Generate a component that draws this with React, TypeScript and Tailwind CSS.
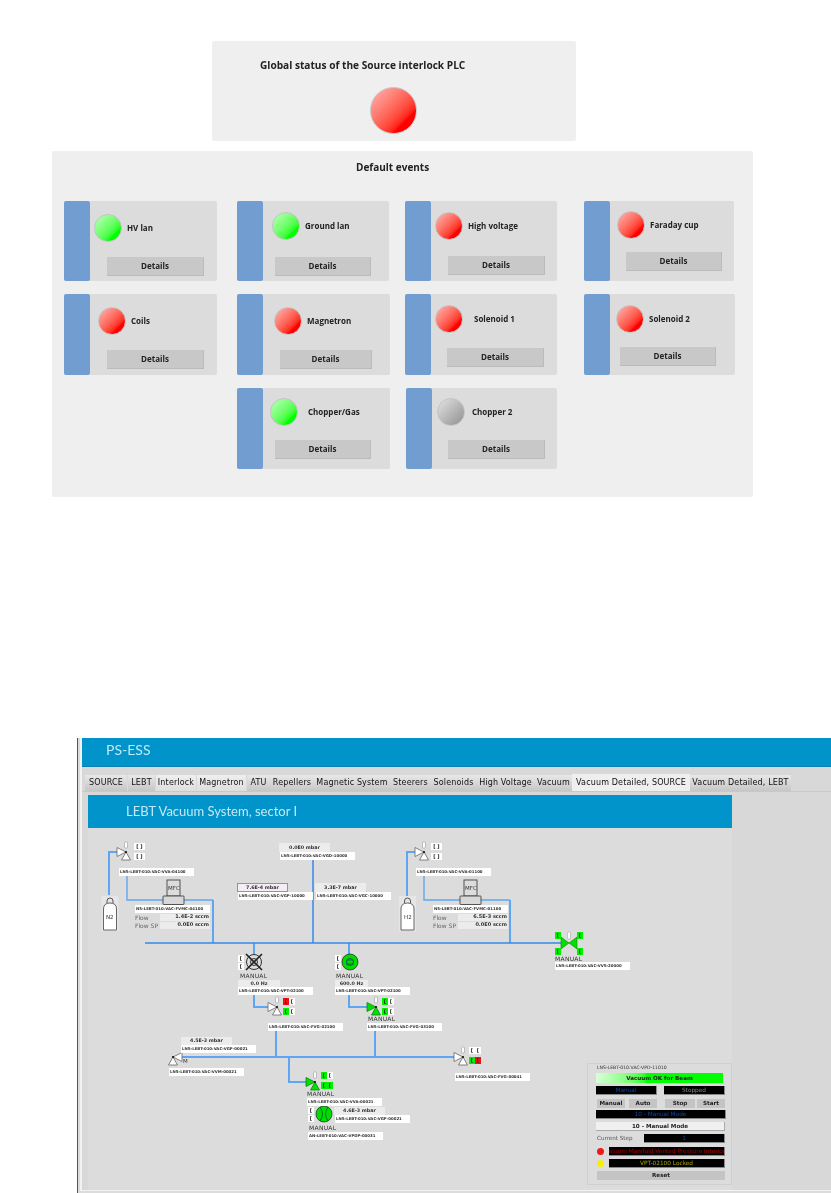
import type { ReactNode } from 'react';

type Led = 'red' | 'green' | 'gray';
type Tone = 'white' | 'green' | 'red';

interface EventCard {
  name: string;
  led: Led;
  cell: string;
  ledBox: string;
  textGap: string;
  button: string;
}

const ledClass: Record<Led, string> = {
  red: 'from-[#ffb4b4] to-[#ff0000] to-75%',
  green: 'from-[#b8ffb8] to-[#00ff00] to-75%',
  gray: 'from-[#e4e4e4] to-[#909090]',
};

// the original panel was placed by hand, so every card has its own small offsets
const cards: EventCard[] = [
  { name: 'HV lan', led: 'green', cell: 'h-[80px] w-[153px]', ledBox: 'ml-[4px] mt-[13px]', textGap: 'ml-[5px]', button: 'ml-[17px] mt-[15px] w-[97px]' },
  { name: 'Ground lan', led: 'green', cell: 'h-[80px] w-[152px]', ledBox: 'ml-[9px] mt-[11px]', textGap: 'ml-[5px]', button: 'ml-[12px] mt-[17px] w-[96px]' },
  { name: 'High voltage', led: 'red', cell: 'h-[80px] w-[152px]', ledBox: 'ml-[4px] mt-[11px]', textGap: 'ml-[5px]', button: 'ml-[17px] mt-[16px] w-[97px]' },
  { name: 'Faraday cup', led: 'red', cell: 'h-[80px] w-[150px]', ledBox: 'ml-[7px] mt-[10px]', textGap: 'ml-[5px]', button: 'ml-[16px] mt-[13px] w-[96px]' },
  { name: 'Coils', led: 'red', cell: 'h-[81px] w-[153px]', ledBox: 'ml-[8px] mt-[13px]', textGap: 'ml-[5px]', button: 'ml-[17px] mt-[15px] w-[97px]' },
  { name: 'Magnetron', led: 'red', cell: 'h-[81px] w-[153px]', ledBox: 'ml-[11px] mt-[13px]', textGap: 'ml-[5px]', button: 'ml-[17px] mt-[15px] w-[92px]' },
  { name: 'Solenoid 1', led: 'red', cell: 'h-[81px] w-[152px]', ledBox: 'ml-[4px] mt-[11px]', textGap: 'ml-[11px]', button: 'ml-[16px] mt-[15px] w-[97px]' },
  { name: 'Solenoid 2', led: 'red', cell: 'h-[81px] w-[151px]', ledBox: 'ml-[6px] mt-[11px]', textGap: 'ml-[5px]', button: 'ml-[10px] mt-[14px] w-[96px]' },
  { name: 'Chopper/Gas', led: 'green', cell: 'col-start-2 h-[81px] w-[153px]', ledBox: 'ml-[7px] mt-[10px]', textGap: 'ml-[10px]', button: 'ml-[12px] mt-[14px] w-[96px]' },
  { name: 'Chopper 2', led: 'gray', cell: 'ml-px h-[81px] w-[151px]', ledBox: 'ml-[5px] mt-[10px]', textGap: 'ml-[7px]', button: 'ml-[16px] mt-[14px] w-[97px]' },
];

const tabs = [
  { name: 'SOURCE', box: 'w-[42px] mr-px' },
  { name: 'LEBT', box: 'w-[27px] mr-px' },
  { name: 'Interlock', box: 'w-[40px] mr-px', light: true },
  { name: 'Magnetron', box: 'w-[49px] mr-px', light: true },
  { name: 'ATU', box: 'w-[23px]' },
  { name: 'Repellers', box: 'w-[44px]' },
  { name: 'Magnetic System', box: 'w-[76px]' },
  { name: 'Steerers', box: 'w-[41px]' },
  { name: 'Solenoids', box: 'w-[45px]' },
  { name: 'High Voltage', box: 'w-[59px]' },
  { name: 'Vacuum', box: 'w-[37px]' },
  { name: 'Vacuum Detailed, SOURCE', box: 'w-[118px]', active: true },
  { name: 'Vacuum Detailed, LEBT', box: 'w-[101px]' },
];

function EventTile({ card }: { card: EventCard }) {
  return (
    <div className={`flex rounded-[2px] bg-[#dcdcdc] ${card.cell}`}>
      <div className="w-[26px] shrink-0 rounded-[2px] bg-[#729dd1]" />
      <div className="flex min-w-0 flex-col">
        <div className={`flex items-center ${card.ledBox}`}>
          <div className={`h-[28px] w-[28px] shrink-0 rounded-full border border-[#c4c4c4] bg-linear-to-br ${ledClass[card.led]}`} />
          <span className={`whitespace-nowrap text-[8px] font-bold text-[#222] ${card.textGap}`}>{card.name}</span>
        </div>
        <div className={`flex h-[19px] items-center justify-center border-b border-r border-[#bbb] bg-[#c8c8c8] text-[8px] font-bold text-[#222] ${card.button}`}>
          Details
        </div>
      </div>
    </div>
  );
}

// page coordinates are used on the canvas, it starts at 88,828
function At({ x, y, className, children }: { x: number; y: number; className?: string; children?: ReactNode }) {
  return (
    <div className={`absolute whitespace-nowrap ${className ?? ''}`} style={{ left: x - 88, top: y - 828 }}>
      {children}
    </div>
  );
}

function Tag({ text }: { text: string }) {
  return (
    <div className="flex h-[8px] w-[75px] items-center bg-white pl-px text-[3.9px] font-bold text-[#333]">
      {text}
    </div>
  );
}

function Reading({ text, box = 'h-[9px] w-[51px] bg-[#ececec]' }: { text: string; box?: string }) {
  return (
    <div className={`flex items-center justify-center text-[4.8px] font-bold text-[#333] ${box}`}>
      {text}
    </div>
  );
}

function Manual({ className = '' }: { className?: string }) {
  return <div className={`text-[6px] leading-[7px] tracking-[0.3px] text-[#333] ${className}`}>MANUAL</div>;
}

function Flag({ tone = 'white', wide }: { tone?: Tone; wide?: boolean }) {
  const toneClass = tone === 'green' ? 'bg-[#00f000]' : tone === 'red' ? 'bg-[#f01010]' : 'bg-white';
  return (
    <div className={`flex h-[7px] items-center justify-center text-[5px] font-bold text-[#222] ${wide ? 'w-[11px]' : 'w-[6px]'} ${toneClass}`}>
      {wide ? '[ ]' : '['}
    </div>
  );
}

// two rows of state flags beside a valve
function Flags({ x, y, rows }: { x: number; y: number; rows: Tone[][] }) {
  return (
    <At x={x} y={y} className="flex flex-col gap-[3px]">
      {rows.map((row, i) => (
        <div key={i} className="flex">
          {row.map((tone, j) => (
            <Flag key={j} tone={tone} />
          ))}
        </div>
      ))}
    </At>
  );
}

function ValveFlags({ x, y }: { x: number; y: number }) {
  return (
    <At x={x} y={y} className="flex flex-col gap-[3px]">
      <Flag wide />
      <Flag wide />
    </At>
  );
}

function PumpFlags({ x, y }: { x: number; y: number }) {
  return (
    <At x={x} y={y} className="flex flex-col gap-px">
      <Flag />
      <Flag />
    </At>
  );
}

function Gauge({ x, y, text, tag, box, indent }: { x: number; y: number; text: string; tag: string; box?: string; indent?: boolean }) {
  return (
    <At x={x} y={y} className="flex flex-col">
      <Reading text={text} box={box} />
      <div className={indent ? 'ml-px' : ''}>
        <Tag text={tag} />
      </div>
    </At>
  );
}

function FlowRow({ label, value }: { label: string; value: string }) {
  return (
    <div className="flex h-[8px] items-center justify-between">
      <span className="text-[6px] text-[#666]">{label}</span>
      <span className="flex h-[7px] w-[50px] items-center justify-end bg-[#ececec] pr-px text-[5px] font-bold text-[#333]">{value}</span>
    </div>
  );
}

function FlowBlock({ x, tag, flow }: { x: number; tag: string; flow: string }) {
  return (
    <At x={x} y={905} className="flex w-[75px] flex-col">
      <Tag text={tag} />
      <FlowRow label="Flow" value={flow} />
      <FlowRow label="Flow SP" value="0.0E0 sccm" />
    </At>
  );
}

function Small({ x, y, text }: { x: number; y: number; text: string }) {
  return <At x={x} y={y} className="text-[5.5px] leading-[6px] text-[#333]">{text}</At>;
}

function Valve({ x, y, green, mirror }: { x: number; y: number; green?: boolean; mirror?: boolean }) {
  const fill = green ? '#00e000' : '#fff';
  const stroke = green ? '#108010' : '#666';
  const d = mirror ? 1 : -1;
  return (
    <g>
      {!mirror && <rect x={x - 1.5} y={y - 10} width="3" height="6" rx="1" fill="#fff" stroke="#999" strokeWidth="0.6" />}
      <polygon points={`${x},${y} ${x + d * 9},${y - 4.5} ${x + d * 9},${y + 4.5}`} fill={fill} stroke={stroke} strokeWidth="0.8" />
      <polygon points={`${x},${y} ${x - 4.5},${y + 8} ${x + 4.5},${y + 8}`} fill={fill} stroke={stroke} strokeWidth="0.8" />
      <circle cx={x} cy={y} r="1.1" fill="#111" />
    </g>
  );
}

function Mfc({ x }: { x: number }) {
  return (
    <g fill="#d8d8d8" stroke="#444" strokeWidth="0.9">
      <rect x={x + 4} y="880" width="13" height="16" fill="none" />
      <rect x={x} y="896" width="21" height="8.5" rx="0.5" />
    </g>
  );
}

function Bottle({ x }: { x: number }) {
  return (
    <g>
      <rect x={x - 2} y="896" width="17" height="35" fill="#e6e6e6" />
      <path d={`M${x + 3.5} 903 v-2 a3 3 0 0 1 6 0 v2`} fill="none" stroke="#444" strokeWidth="0.9" />
      <path d={`M${x} 930 v-21 q0 -6 6.5 -6 q6.5 0 6.5 6 v21 z`} fill="#fff" stroke="#555" strokeWidth="0.9" />
    </g>
  );
}

function Pipes() {
  return (
    <svg className="absolute left-0 top-0 h-[362px] w-[644px]" viewBox="88 828 644 362">
      <g fill="none" stroke="#5ea6f4" strokeWidth="2">
        <path d="M109 895 V852 H118" />
        <path d="M407 897 V852 H416" />
        <path d="M254 995 V1007 H268" />
        <path d="M349 995 V1007 H367" />
        <path d="M276 1031 V1057" />
        <path d="M375 1031 V1057" />
        <path d="M181 1057 H455" />
        <path d="M289 1057 V1082 H307" />
        <path d="M213 900 V943" />
        <path d="M510 900 V943" />
        <path d="M127 876 V900 H213" strokeWidth="1.4" />
        <path d="M424 876 V900 H510" strokeWidth="1.4" />
        <path d="M254 943 V955" />
        <path d="M349 943 V955" />
      </g>
      <path d="M145 943 H562 M313 859 V943" fill="none" stroke="#3389ea" strokeWidth="1.5" />

      <Bottle x={103.5} />
      <Bottle x={401} />
      <Mfc x={163} />
      <Mfc x={460} />

      <Valve x={126} y={852} />
      <Valve x={424} y={852} />
      <Valve x={277} y={1007} />
      <Valve x={376} y={1007} green />
      <Valve x={173} y={1057} mirror />
      <Valve x={315} y={1082} green />
      <Valve x={463} y={1057} />

      {/* gate valve on the main line */}
      <rect x="567.5" y="932" width="3" height="7" rx="1" fill="#fff" stroke="#aaa" strokeWidth="0.6" />
      <polygon points="569,943 561,937 561,949" fill="#00e000" stroke="#108010" strokeWidth="0.6" />
      <polygon points="569,943 577,937 577,949" fill="#00e000" stroke="#108010" strokeWidth="0.6" />

      {/* pump stopped */}
      <circle cx="254" cy="962" r="7.5" fill="#ddd" stroke="#333" strokeWidth="1" />
      <circle cx="254" cy="962" r="3.5" fill="none" stroke="#333" strokeWidth="1" />
      <path d="M246 954 L262 970 M262 954 L246 970" stroke="#222" strokeWidth="1.6" />

      {/* pump running */}
      <circle cx="350" cy="962" r="8" fill="#00dc00" stroke="#222" strokeWidth="0.7" />
      <circle cx="350" cy="962" r="3.5" fill="none" stroke="#155" strokeWidth="1" />
      <path d="M346 960 H354 M346 964 H354" stroke="#155" strokeWidth="0.8" />

      {/* primary pump */}
      <circle cx="324" cy="1114" r="8" fill="#00dc00" stroke="#222" strokeWidth="0.7" />
      <path d="M320 1107 Q325 1114 320 1121 M328 1107 Q323 1114 328 1121" fill="none" stroke="#063" strokeWidth="0.9" />
    </svg>
  );
}

function BlackBar({ className, children }: { className: string; children: ReactNode }) {
  return (
    <div className={`flex h-[9px] items-center justify-center overflow-hidden whitespace-nowrap border-b border-r border-[#888] bg-black text-[5.8px] ${className}`}>
      {children}
    </div>
  );
}

function GrayButton({ className, children }: { className: string; children: ReactNode }) {
  return (
    <div className={`flex h-[9px] items-center justify-center bg-[#c4c4c4] text-[5.6px] font-bold text-[#222] ${className}`}>
      {children}
    </div>
  );
}

function ControlBox() {
  return (
    <At x={587} y={1063} className="h-[122px] w-[145px] border border-[#d0d0d0] bg-[#dcdcdc] pl-[8px] pr-[6px]">
      <div className="absolute left-[9px] top-[1px] text-[4.6px] leading-[6px] text-[#333]">LNS-LEBT-010:VAC-VPD-11010</div>
      <div className="mt-[9px] flex h-[10px] w-[127px] items-center justify-center bg-linear-to-r from-[#d8ffd8] to-[#00ff00] to-40% text-[5.6px] font-bold text-[#222]">
        Vacuum OK for Beam
      </div>
      <div className="mt-[3px] flex justify-between">
        <BlackBar className="w-[61px] text-[#0a4aa8]">Manual</BlackBar>
        <BlackBar className="w-[61px] text-[#888]">Stopped</BlackBar>
      </div>
      <div className="mt-[4px] flex pl-px">
        <GrayButton className="w-[28px]">Manual</GrayButton>
        <GrayButton className="ml-[4px] w-[28px]">Auto</GrayButton>
        <GrayButton className="ml-[8px] w-[30px]">Stop</GrayButton>
        <GrayButton className="ml-[2px] w-[28px]">Start</GrayButton>
      </div>
      <BlackBar className="mt-[2px] w-[130px] text-[#0a4aa8]">10 - Manual Mode</BlackBar>
      <div className="mt-[3px] flex h-[9px] w-[129px] items-center justify-center border-b border-r border-[#aaa] bg-[#f0f0f0] text-[5.6px] font-bold text-[#222]">
        10 - Manual Mode
      </div>
      <div className="mt-[3px] flex items-center justify-between">
        <span className="pl-px text-[5.6px] text-[#555]">Current Step</span>
        <BlackBar className="w-[81px] text-[#0a4aa8]">1</BlackBar>
      </div>
      <div className="mt-[4px] flex items-center">
        <div className="ml-px h-[7px] w-[7px] shrink-0 rounded-full bg-[#f01818]" />
        <BlackBar className="ml-[5px] w-[117px] text-[#b00000]">Vacuum Manifold Vented Pressure Interlock</BlackBar>
      </div>
      <div className="mt-[3px] flex items-center">
        <div className="ml-px h-[7px] w-[7px] shrink-0 rounded-full bg-[#f4f000]" />
        <BlackBar className="ml-[5px] w-[117px] text-[#a8a800]">VPT-02100 Locked</BlackBar>
      </div>
      <GrayButton className="ml-px mt-[3px] w-[128px]">Reset</GrayButton>
    </At>
  );
}

function Canvas() {
  return (
    <div className="relative h-[362px] bg-[#dcdcdc] font-['DejaVu_Sans',sans-serif]">
      <Pipes />

      <ValveFlags x={134} y={843} />
      <At x={119} y={868}><Tag text="LNS-LEBT-010:VAC-VVA-04100" /></At>
      <Small x={168} y={885} text="MFC" />
      <Small x={106} y={914} text="N2" />
      <FlowBlock x={135} tag="NS-LEBT-010:VAC-FVMC-04100" flow="1.4E-2 sccm" />

      <Gauge x={279} y={843} text="0.0E0 mbar" tag="LNS-LEBT-010:VAC-VGD-10000" indent />
      <Gauge x={237} y={883} text="7.6E-4 mbar" tag="LNS-LEBT-010:VAC-VGP-10000" box="h-[9px] w-[51px] bg-[#f4eef4] ring-1 ring-inset ring-[#ff4cf0]" indent />
      <Gauge x={315} y={883} text="3.3E-7 mbar" tag="LNS-LEBT-010:VAC-VGC-10000" indent />

      <ValveFlags x={431} y={843} />
      <At x={416} y={868}><Tag text="LNS-LEBT-010:VAC-VVA-01100" /></At>
      <Small x={465} y={885} text="MFC" />
      <Small x={404} y={914} text="H2" />
      <FlowBlock x={433} tag="NS-LEBT-010:VAC-FVMC-01100" flow="6.5E-3 sccm" />

      <At x={555} y={932} className="grid w-[28px] grid-cols-[6px_6px] justify-between gap-y-[9px]">
        <Flag tone="green" />
        <Flag tone="green" />
        <Flag tone="green" />
        <Flag tone="green" />
      </At>
      <At x={555} y={955} className="flex flex-col">
        <Manual />
        <Tag text="LNS-LEBT-010:VAC-VVS-20000" />
      </At>

      <PumpFlags x={238} y={955} />
      <At x={238} y={972} className="flex flex-col">
        <Manual className="ml-[2px] h-[8px]" />
        <Reading text="0.0 Hz" box="h-[7px] w-[42px] bg-[#ececec]" />
        <Tag text="LNS-LEBT-010:VAC-VPT-02100" />
      </At>
      <Flags x={283} y={998} rows={[['red', 'white'], ['green', 'white']]} />
      <At x={268} y={1023}><Tag text="LNS-LEBT-010:VAC-FVG-02100" /></At>

      <PumpFlags x={335} y={955} />
      <At x={335} y={972} className="flex flex-col">
        <Manual className="ml-px h-[8px]" />
        <Reading text="600.0 Hz" box="h-[7px] w-[33px] bg-[#ececec]" />
        <Tag text="LNS-LEBT-010:VAC-VPT-02100" />
      </At>
      <Flags x={382} y={998} rows={[['green', 'white'], ['green', 'white']]} />
      <At x={367} y={1015} className="flex flex-col">
        <Manual className="ml-px h-[8px]" />
        <Tag text="LNS-LEBT-010:VAC-FVG-03100" />
      </At>

      <Gauge x={181} y={1037} text="4.5E-3 mbar" tag="LNS-LEBT-010:VAC-VGP-00021" box="h-[8px] w-[51px] bg-[#ececec]" />
      <Small x={183} y={1058} text="M" />
      <At x={169} y={1068}><Tag text="LNS-LEBT-010:VAC-VVM-00021" /></At>

      <Flags x={321} y={1072} rows={[['green', 'white'], ['green', 'green']]} />
      <At x={307} y={1090} className="flex flex-col">
        <Manual className="h-[8px]" />
        <Tag text="LNS-LEBT-010:VAC-VVA-00021" />
      </At>
      <PumpFlags x={308} y={1107} />
      <Gauge x={334} y={1107} text="4.6E-3 mbar" tag="LNS-LEBT-010:VAC-VGP-00021" box="h-[8px] w-[51px] bg-[#ececec]" indent />
      <At x={308} y={1124} className="flex flex-col">
        <Manual className="ml-px h-[8px]" />
        <Tag text="AN-LEBT-010:VAC-VPDP-00031" />
      </At>

      <Flags x={469} y={1047} rows={[['white', 'white'], ['green', 'red']]} />
      <At x={455} y={1073}><Tag text="LNS-LEBT-010:VAC-FVG-00041" /></At>

      <ControlBox />
    </div>
  );
}

function VacuumScreen() {
  return (
    <div className="ml-[77px] mt-[241px] h-[455px] border-l border-[#555] bg-[#dcdcdc] pl-[2px] font-['DejaVu_Sans',sans-serif]">
      <div className="h-[453px] border-b-2 border-l-2 border-[#f2f2f2]">
        <div className="flex h-[29px] items-center border-b border-[#0a80b0] bg-[#0094ca] pb-[5px] pl-[24px] font-['Lato',sans-serif] text-[14px] text-[#c4e8f6]">
          PS-ESS
        </div>
        <div className="h-[423px] bg-[#d8d8d8]">
          <div className="flex h-[25px] items-end border-b border-[#c8c8c8] pl-[3px]">
            {tabs.map((tab) => (
              <div
                key={tab.name}
                className={`flex items-center justify-center whitespace-nowrap text-[8px] tracking-[0.15px] text-[#111] ${tab.box} ${
                  tab.active
                    ? 'h-[17px] bg-[#efefef]'
                    : tab.light
                      ? 'h-[16px] bg-linear-to-b from-[#efefef] to-[#dedede]'
                      : 'h-[16px] bg-linear-to-b from-[#e8e8e8] to-[#c6c6c6]'
                }`}
              >
                {tab.name}
              </div>
            ))}
          </div>
          <div className="ml-[6px] mt-[3px] w-[644px]">
            <div className="flex h-[33px] items-center bg-[#0094ca] pl-[38px] font-['Lato',sans-serif] text-[13px] text-[#c4e8f6]">
              LEBT Vacuum System, sector I
            </div>
            <Canvas />
          </div>
        </div>
      </div>
    </div>
  );
}

export default function App() {
  return (
    <div className="h-[1193px] w-[831px] overflow-hidden bg-white font-['Open_Sans',sans-serif] blur-[0.4px]">
      <div className="pt-[41px]">
        <div className="ml-[212px] h-[100px] w-[364px] rounded-[2px] bg-[#efefef] pl-[48px] pt-[17px]">
          <div className="text-[10.15px] font-bold leading-[14px] text-[#222]">Global status of the Source interlock PLC</div>
          <div className="ml-[110px] mt-[15px] h-[47px] w-[47px] rounded-full border border-[#c4c4c4] bg-linear-to-br from-[#ffb4b4] to-[#ff0000] to-75%" />
        </div>
      </div>
      <div className="ml-[52px] mt-[10px] h-[346px] w-[701px] rounded-[2px] bg-[#efefef] pl-[12px] pt-[9px]">
        <div className="ml-[292px] text-[10px] font-bold leading-[14px] text-[#222]">Default events</div>
        <div className="mt-[27px] grid grid-cols-[173px_168px_179px_151px] gap-y-[13px]">
          {cards.map((card) => (
            <EventTile key={card.name} card={card} />
          ))}
        </div>
      </div>
      <VacuumScreen />
    </div>
  );
}
